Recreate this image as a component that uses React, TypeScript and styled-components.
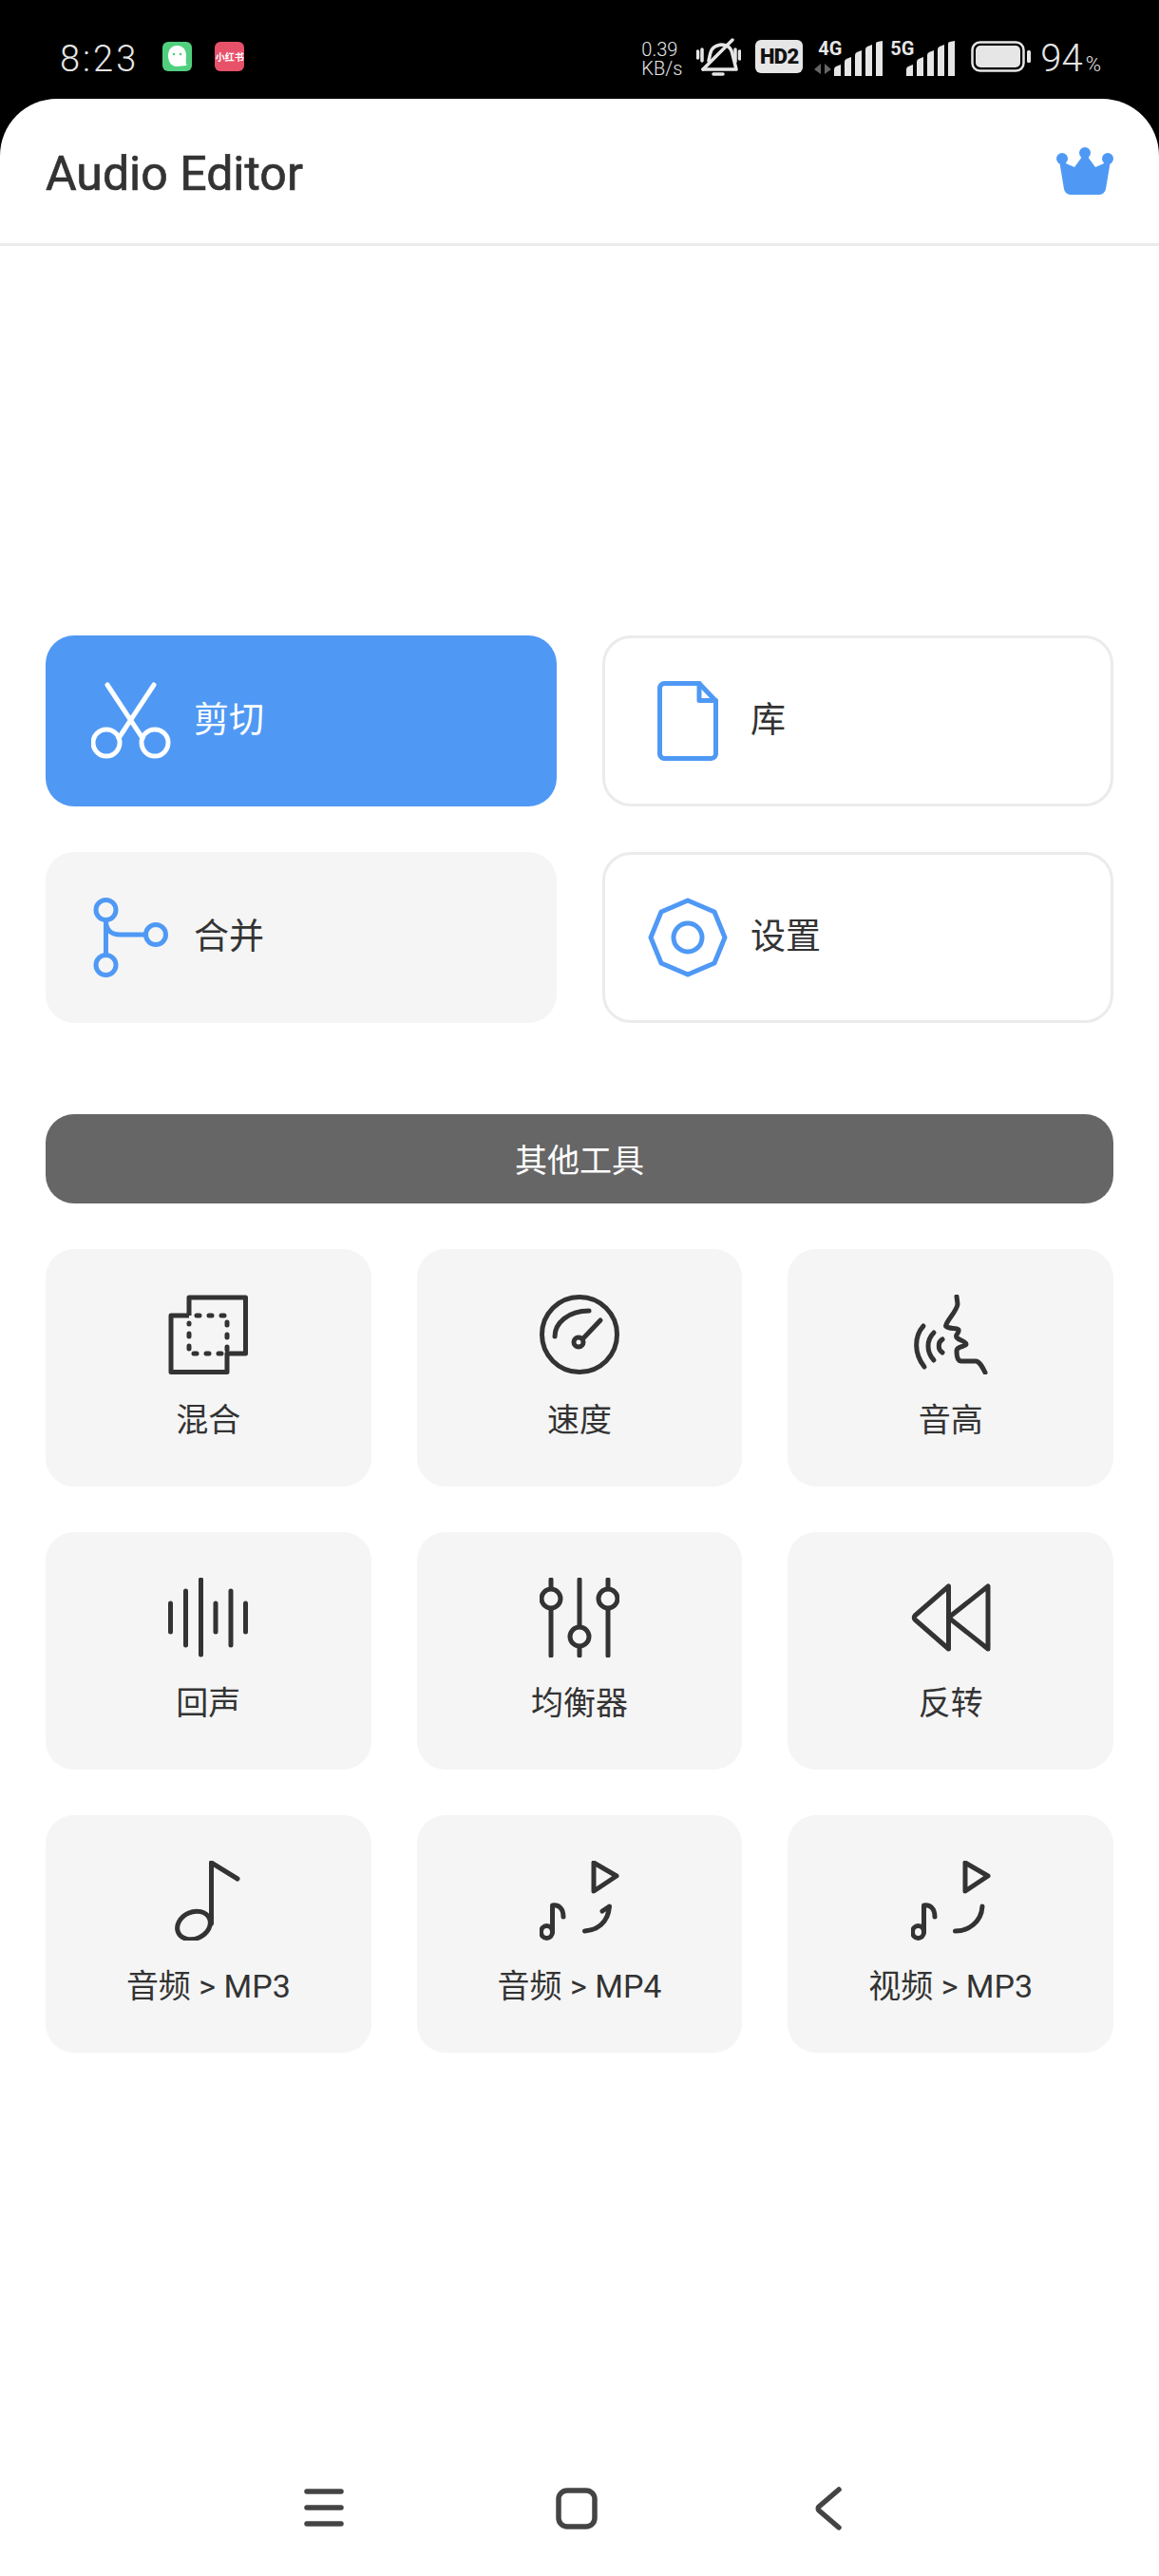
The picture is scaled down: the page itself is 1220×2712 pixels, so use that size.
import React from "react";
import styled, { createGlobalStyle } from "styled-components";

const Colors = {
  blue: "#4f99f5",
  ink: "#333333",
  tile: "#f5f5f5",
  line: "#ebebeb",
  status: "#e6e6e6",
};

const FONT = `Roboto, "Noto Sans CJK SC", sans-serif`;

const GlobalStyle = createGlobalStyle`
  html, body {
    margin: 0;
    padding: 0;
    background: #000000;
    font-family: ${FONT};
  }
  * { box-sizing: border-box; }
`;

const Page = styled.div`
  width: 1220px;
  height: 2712px;
  display: flex;
  flex-direction: column;
  background: #000000;
`;

/* status bar */
const StatusBar = styled.div`
  height: 104px;
  flex: none;
  display: flex;
  align-items: flex-start;
  padding: 40px 61px 0 63px;
  color: ${Colors.status};
`;

const Clock = styled.div`
  font-size: 38px;
  line-height: 44px;
  font-weight: 300;
  letter-spacing: 3px;
`;

const AppBadge = styled.div<{ $bg: string; $gap: number }>`
  width: 31px;
  height: 31px;
  margin: 4px 0 0 ${(p) => p.$gap}px;
  border-radius: 6px;
  background: ${(p) => p.$bg};
  color: #ffffff;
  display: flex;
  align-items: center;
  justify-content: center;
  font-size: 10px;
  font-weight: 700;
  white-space: nowrap;
  overflow: hidden;
`;

const StatusRight = styled.div`
  margin-left: auto;
  display: flex;
  align-items: flex-start;
`;

const NetSpeed = styled.div`
  width: 44px;
  margin-top: 2px;
  font-size: 20px;
  line-height: 20px;
  font-weight: 300;
  white-space: nowrap;
`;

const BellIcon = styled.svg`
  width: 47px;
  height: 41px;
  margin-left: 14px;
`;

const HdBadge = styled.div`
  width: 50px;
  height: 35px;
  margin: 2px 0 0 15px;
  border-radius: 6px;
  background: ${Colors.status};
  color: #111111;
  font-size: 22px;
  line-height: 35px;
  font-weight: 900;
  text-align: center;
  letter-spacing: -0.5px;
`;

const SignalWrap = styled.div<{ $w: number; $gap: number }>`
  position: relative;
  width: ${(p) => p.$w}px;
  height: 37px;
  margin: 3px 0 0 ${(p) => p.$gap}px;
  display: flex;
  justify-content: flex-end;
`;

const SignalLabel = styled.span<{ $left: number }>`
  position: absolute;
  left: ${(p) => p.$left}px;
  top: -2px;
  font-size: 20px;
  line-height: 20px;
  font-weight: 700;
`;

const SignalArrows = styled.svg`
  position: absolute;
  left: 0;
  bottom: 2px;
  width: 18px;
  height: 11px;
`;

const BatteryIcon = styled.svg`
  width: 63px;
  height: 33px;
  margin: 3px 0 0 17px;
`;

const Percent = styled.div`
  margin-left: 10px;
  font-size: 40px;
  line-height: 44px;
  font-weight: 300;
  white-space: nowrap;
  small {
    font-size: 22px;
    margin-left: 3px;
  }
`;

/* white sheet */
const Sheet = styled.div`
  flex: 1;
  display: flex;
  flex-direction: column;
  background: #ffffff;
  border-radius: 60px 60px 0 0;
`;

const Header = styled.header`
  height: 155px;
  flex: none;
  display: flex;
  align-items: center;
  justify-content: space-between;
  padding: 0 48px;
  border-bottom: 3px solid ${Colors.line};
`;

const Title = styled.h1`
  margin: 6px 0 0;
  font-size: 50px;
  line-height: 60px;
  font-weight: 400;
  -webkit-text-stroke: 0.7px ${Colors.ink};
  color: ${Colors.ink};
`;

const CrownIcon = styled.svg`
  width: 60px;
  height: 50px;
  color: ${Colors.blue};
`;

const Content = styled.main`
  flex: 1;
  padding: 410px 48px 0;
`;

const MainGrid = styled.div`
  display: grid;
  grid-template-columns: 538px 538px;
  grid-auto-rows: 180px;
  gap: 48px;
`;

const MainCard = styled.div<{ $variant: "primary" | "muted" | "outline" }>`
  display: flex;
  align-items: center;
  gap: 24px;
  padding-left: 48px;
  border-radius: 30px;
  background: ${(p) =>
    p.$variant === "primary" ? Colors.blue : p.$variant === "muted" ? Colors.tile : "#ffffff"};
  color: ${(p) => (p.$variant === "primary" ? "#ffffff" : Colors.ink)};
  border: ${(p) => (p.$variant === "outline" ? `3px solid ${Colors.line}` : "none")};
  ${(p) => p.$variant === "outline" && "padding-left: 45px;"}
`;

const CardLabel = styled.span`
  font-size: 37px;
  line-height: 44px;
`;

const CardIcon = styled.svg<{ $color: string }>`
  width: 84px;
  height: 84px;
  flex: none;
  color: ${(p) => p.$color};
  fill: none;
  stroke: currentColor;
  stroke-width: 5;
  stroke-linecap: round;
  stroke-linejoin: round;
`;

const SectionBar = styled.div`
  margin: 96px 0 48px;
  height: 94px;
  padding-bottom: 2px;
  border-radius: 30px;
  background: #666666;
  color: #ffffff;
  font-size: 34px;
  display: flex;
  align-items: center;
  justify-content: center;
`;

const ToolGrid = styled.div`
  display: grid;
  grid-template-columns: repeat(3, 1fr);
  grid-auto-rows: 250px;
  gap: 48px;
`;

const ToolTile = styled.div`
  display: flex;
  flex-direction: column;
  align-items: center;
  padding-top: 48px;
  border-radius: 30px;
  background: ${Colors.tile};
  color: ${Colors.ink};
`;

const ToolIcon = styled.svg`
  width: 84px;
  height: 84px;
  flex: none;
  fill: none;
  stroke: currentColor;
  stroke-width: 5;
  stroke-linecap: round;
  stroke-linejoin: round;
`;

const ToolLabel = styled.div`
  margin-top: 28px;
  font-size: 34px;
  line-height: 40px;
  white-space: nowrap;
`;

/* nav bar */
const NavBar = styled.nav`
  height: 152px;
  flex: none;
  display: grid;
  grid-template-columns: repeat(3, 266px);
  justify-content: center;
  justify-items: center;
  padding: 10px 6px 0 0;
  align-items: center;
  color: #444444;
`;

const NavIcon = styled.svg`
  width: 48px;
  height: 48px;
  fill: none;
  stroke: currentColor;
  stroke-width: 5.5;
  stroke-linecap: round;
  stroke-linejoin: round;
`;

const MergeIcon = () => (
  <CardIcon $color={Colors.blue} viewBox="0 0 84 84">
    <circle cx="15.5" cy="13" r="10.5" />
    <circle cx="15.5" cy="71" r="10.5" />
    <circle cx="68" cy="39" r="10.5" />
    <path d="M15.5 24V60M15.5 26C16 35 22 39 30 39H57" />
  </CardIcon>
);

const ScissorsIcon = () => (
  <CardIcon $color="#ffffff" viewBox="0 0 84 84">
    <circle cx="16" cy="65" r="14" />
    <circle cx="67" cy="65" r="14" />
    <path d="M17 4L54 60M66 4L29 60" />
  </CardIcon>
);

const FileIcon = () => (
  <CardIcon $color={Colors.blue} viewBox="0 0 84 84">
    <path d="M17 2.5H54L71.5 21V76A5 5 0 0 1 66.5 81.5H17A5 5 0 0 1 12.5 76V7.5A5 5 0 0 1 17 2.5Z" />
    <path d="M54 2.5V20.5H71.5" />
  </CardIcon>
);

const GearIcon = () => (
  <CardIcon $color={Colors.blue} viewBox="0 0 84 84">
    <path d="M42 3L70 15L81 42L70 69L42 81L14 69L3 42L14 15Z" />
    <circle cx="42" cy="42" r="15" />
  </CardIcon>
);

const MixIcon = () => (
  <ToolIcon viewBox="0 0 84 84">
    <path strokeLinecap="butt" d="M22 22V3H81.5V62H62V81.5H3V22H22" />
    <path strokeDasharray="3 10" d="M30 22H62V62H22V30" />
  </ToolIcon>
);

const SpeedIcon = () => (
  <ToolIcon viewBox="0 0 84 84">
    <circle cx="42" cy="42" r="39.5" />
    <path d="M16 44C16 30 30 17 52 17M64 27L45 47" />
    <circle cx="41" cy="50" r="5" />
  </ToolIcon>
);

const PitchIcon = () => (
  <ToolIcon viewBox="0 0 84 84">
    <path d="M48 2L49 10C48 18 38 26 36.5 33C40 37 48 34 50 37C51 41 46 42 48 45C50 48 58 49 58 52C58 55 48 54 48 59C48 64 49 70 53 70H68C72 70 75 76 78 82" />
    <path d="M13 33C3 44 3 62 14 76M24 40C16 48 16 60 24 69M33 47C28 50 28 58 33 61" />
  </ToolIcon>
);

const EchoIcon = () => (
  <ToolIcon viewBox="0 0 84 84">
    <path d="M2.5 27V57M18.5 14V71M34.5 2V81M50 27V57M66 14V71M81.5 27V57" />
  </ToolIcon>
);

const EqualizerIcon = () => (
  <ToolIcon viewBox="0 0 84 84">
    <path d="M12 2V82M42 2V82M72 2V82" />
    <circle cx="12" cy="22" r="10" fill={Colors.tile} />
    <circle cx="72" cy="22" r="10" fill={Colors.tile} />
    <circle cx="42" cy="62" r="10" fill={Colors.tile} />
  </ToolIcon>
);

const RewindIcon = () => (
  <ToolIcon viewBox="0 0 84 84">
    <path d="M39.5 9V75L4 44C3 43 3 41 4 40ZM81 9V75L42 44C41 43 41 41 42 40Z" />
  </ToolIcon>
);

const NoteIcon = () => (
  <ToolIcon viewBox="0 0 84 84">
    <ellipse cx="27" cy="68" rx="18" ry="14" transform="rotate(-25 27 68)" />
    <path d="M45.5 66V2L73 19" />
  </ToolIcon>
);

const NotePlayIcon = ({ hook }: { hook?: boolean }) => (
  <ToolIcon viewBox="0 0 84 84">
    <path d="M57 2V32L81 16Z" />
    <ellipse cx="7.5" cy="75" rx="6" ry="6.5" />
    <path d="M13.5 75V47C20 46 25 50 25 59" />
    {hook ? (
      <path d="M47.5 74C60 73 72 66 73.5 48L66 53" />
    ) : (
      <path d="M46.5 74C60 74 74 65 75 48" />
    )}
  </ToolIcon>
);

const Signal = ({ label, left, width, gap, arrows }: { label: string; left: number; width: number; gap: number; arrows?: boolean }) => (
  <SignalWrap $w={width} $gap={gap}>
    <SignalLabel $left={left}>{label}</SignalLabel>
    {arrows && (
      <SignalArrows viewBox="0 0 18 11" fill="#666666">
        <path d="M7 0V11L0 6ZM11 0V11L18 6Z" />
      </SignalArrows>
    )}
    <svg width="51" height="37" viewBox="0 0 51 37" fill={Colors.status}>
      <path d="M0 37V30Q0 28 2 27L7 25V37Z" />
      <path d="M11 37V22Q11 20 13 19L18 17V37Z" />
      <path d="M22 37V15Q22 13 24 12L29 10V37Z" />
      <path d="M33 37V9Q33 7 35 6L40 4V37Z" />
      <path d="M44 37V3Q44 1 46 1L51 0V37Z" />
    </svg>
  </SignalWrap>
);

const tools = [
  { label: "混合", icon: <MixIcon /> },
  { label: "速度", icon: <SpeedIcon /> },
  { label: "音高", icon: <PitchIcon /> },
  { label: "回声", icon: <EchoIcon /> },
  { label: "均衡器", icon: <EqualizerIcon /> },
  { label: "反转", icon: <RewindIcon /> },
  { label: "音频 > MP3", icon: <NoteIcon /> },
  { label: "音频 > MP4", icon: <NotePlayIcon hook /> },
  { label: "视频 > MP3", icon: <NotePlayIcon /> },
];

const App: React.FunctionComponent = () => {
  return (
    <Page>
      <GlobalStyle />
      <StatusBar>
        <Clock>8:23</Clock>
        <AppBadge $bg="#50d07f" $gap={25}>
          <svg width="23" height="25" viewBox="0 0 23 25" fill="#ffffff">
            <path d="M11.5 1C17.5 1 21 5.5 21 11.5C21 15 20 18 21.5 22C17 22 14 23 11 23C5 23 2 18 2 11.5C2 5.5 5.5 1 11.5 1Z" />
            <circle cx="8" cy="10" r="1.3" fill="#50d07f" />
            <circle cx="15" cy="10" r="1.3" fill="#50d07f" />
          </svg>
        </AppBadge>
        <AppBadge $bg="#e8516a" $gap={24}>小红书</AppBadge>
        <StatusRight>
          <NetSpeed>
            0.39
            <br />
            KB/s
          </NetSpeed>
          <BellIcon viewBox="0 0 47 41" fill="none" stroke={Colors.status} strokeWidth="3.5" strokeLinecap="round" strokeLinejoin="round">
            <path d="M38 2L7 33M1.5 14V21M6 12V24M41 12V25M45.5 14V22" />
            <path d="M13 24C15 16 14 9 26 7C33 7 37 11 38 17L42 33H7M18 38H28" />
          </BellIcon>
          <HdBadge>HD2</HdBadge>
          <Signal label="4G" left={4} width={72} gap={12} arrows />
          <Signal label="5G" left={0} width={68} gap={8} />
          <BatteryIcon viewBox="0 0 63 33">
            <rect x="1.5" y="1.5" width="54" height="30" rx="8" fill="none" stroke={Colors.status} strokeWidth="2.5" />
            <rect x="5" y="5" width="47" height="23" rx="5" fill={Colors.status} />
            <rect x="59" y="10" width="4" height="13" rx="1.5" fill={Colors.status} />
          </BatteryIcon>
          <Percent>
            94<small>%</small>
          </Percent>
        </StatusRight>
      </StatusBar>
      <Sheet>
        <Header>
          <Title>Audio Editor</Title>
          <CrownIcon viewBox="0 0 60 50" fill="currentColor">
            <circle cx="6" cy="12" r="6" />
            <circle cx="30" cy="6" r="6" />
            <circle cx="54" cy="12" r="6" />
            <path d="M3 14L8 44A7 7 0 0 0 15 50H45A7 7 0 0 0 52 44L57 14L41 21L30 6L19 21Z" />
          </CrownIcon>
        </Header>
        <Content>
          <MainGrid>
            <MainCard $variant="primary">
              <ScissorsIcon />
              <CardLabel>剪切</CardLabel>
            </MainCard>
            <MainCard $variant="outline">
              <FileIcon />
              <CardLabel>库</CardLabel>
            </MainCard>
            <MainCard $variant="muted">
              <MergeIcon />
              <CardLabel>合并</CardLabel>
            </MainCard>
            <MainCard $variant="outline">
              <GearIcon />
              <CardLabel>设置</CardLabel>
            </MainCard>
          </MainGrid>
          <SectionBar>其他工具</SectionBar>
          <ToolGrid>
            {tools.map((tool) => (
              <ToolTile key={tool.label}>
                {tool.icon}
                <ToolLabel>{tool.label}</ToolLabel>
              </ToolTile>
            ))}
          </ToolGrid>
        </Content>
        <NavBar>
          <NavIcon viewBox="0 0 48 48">
            <path d="M6 6H42M6 23H42M6 40H42" />
          </NavIcon>
          <NavIcon viewBox="0 0 48 48">
            <rect x="5" y="5" width="38" height="38" rx="9" />
          </NavIcon>
          <NavIcon viewBox="0 0 48 48">
            <path d="M34 4L13 22C12 23 12 25 13 26L34 44" />
          </NavIcon>
        </NavBar>
      </Sheet>
    </Page>
  );
};

export default App;
